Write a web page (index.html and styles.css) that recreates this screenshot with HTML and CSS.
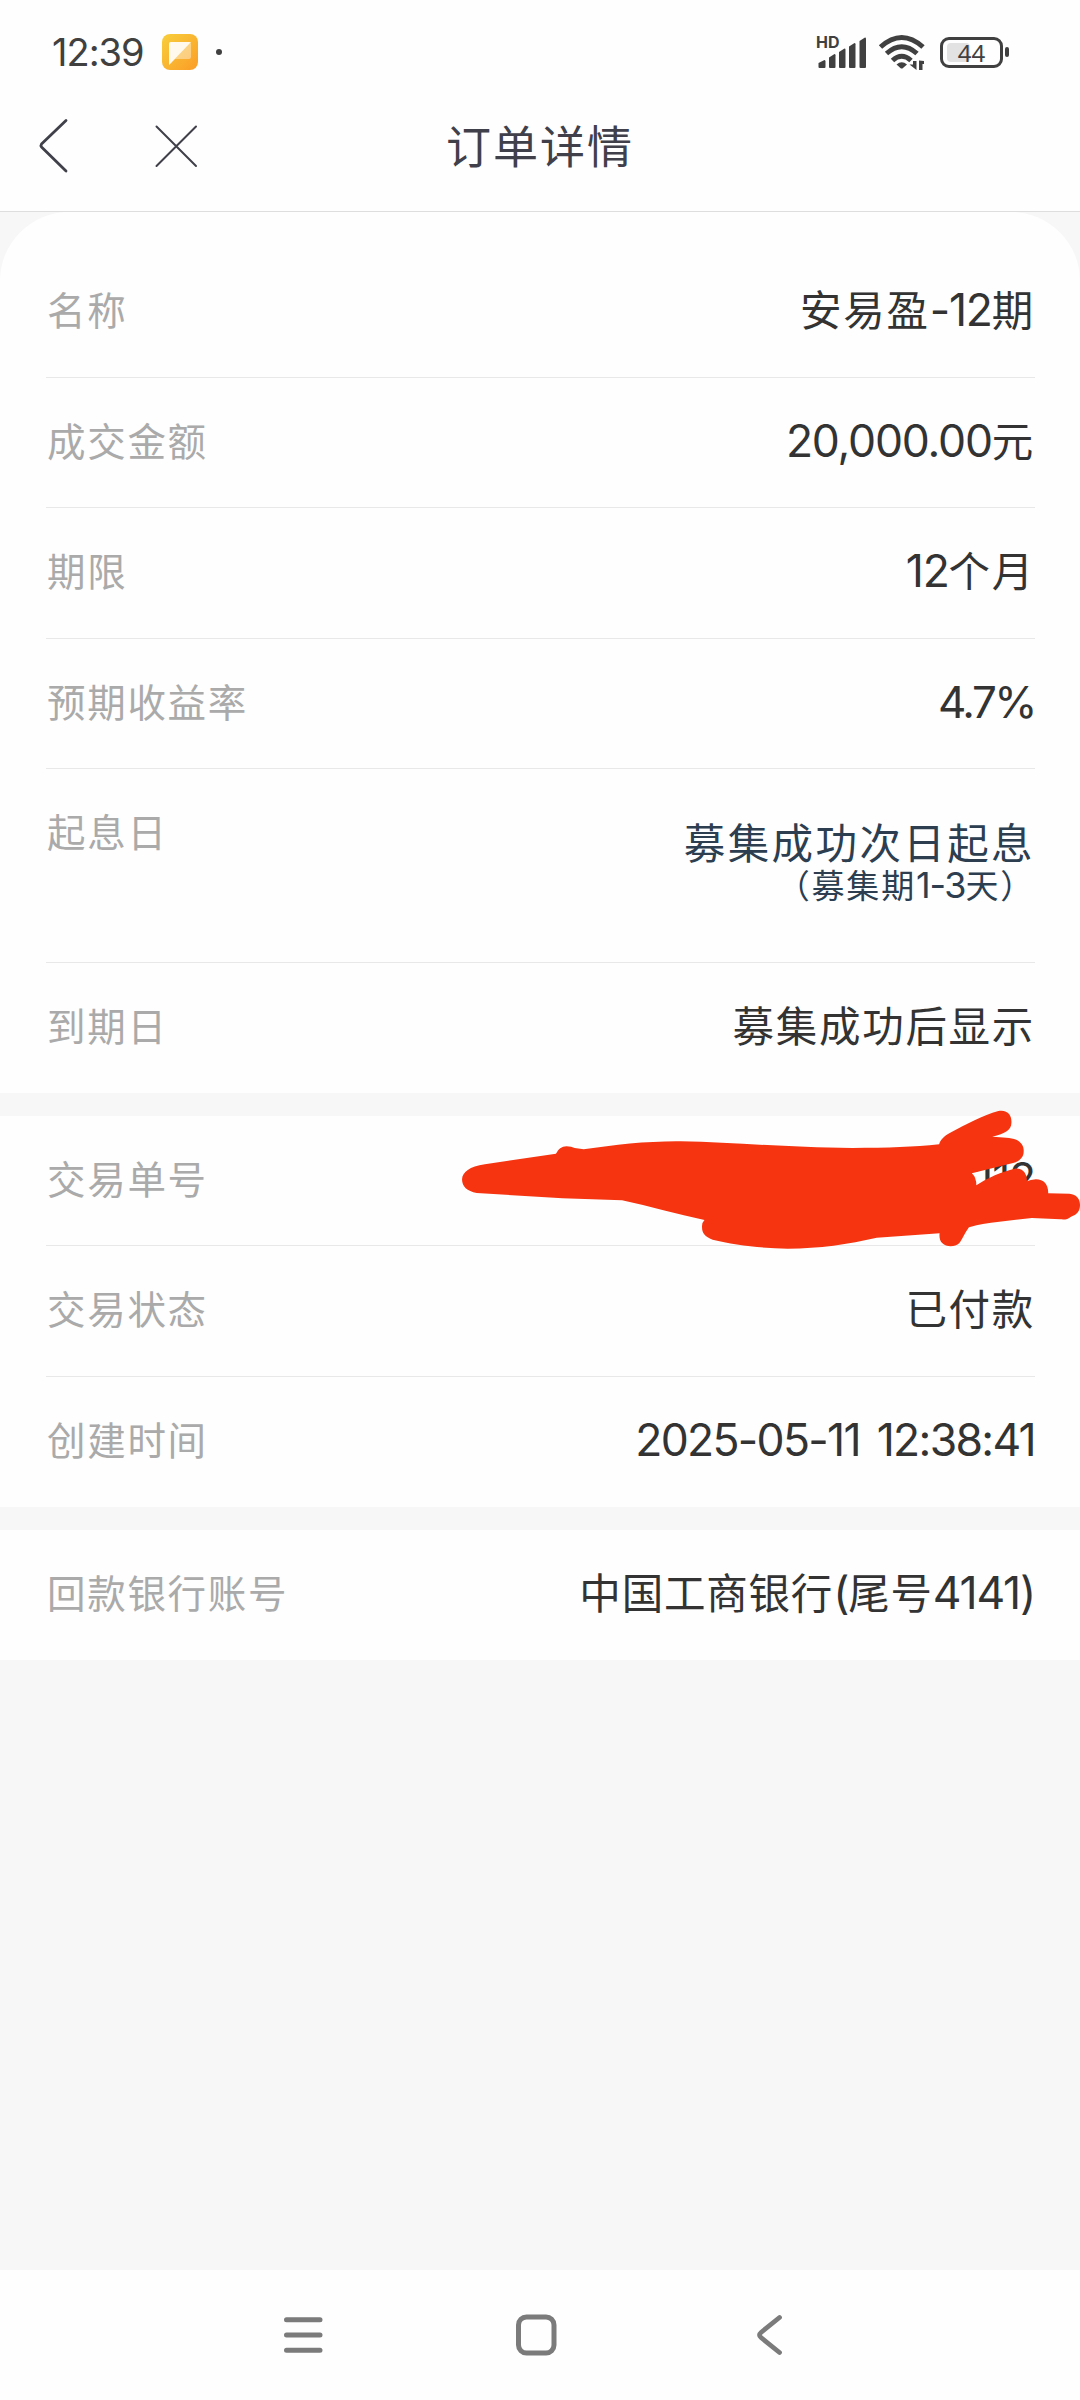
FILE: index.html
```html
<!DOCTYPE html>
<html lang="zh-CN">
<head>
    <meta charset="UTF-8">
    <meta name="viewport" content="width=device-width, initial-scale=1.0">
    <title>订单详情</title>
    <link rel="stylesheet" href="styles.css">
</head>
<body>

    <div class="screen">
        <div class="status-bar">
            <span class="time">12:39</span>
            <svg class="app-icon" width="40" height="40" viewBox="0 0 40 40">
                <defs>
                    <linearGradient id="appBg" x1="0" y1="0" x2="1" y2="1">
                        <stop offset="0" stop-color="#f8cf3c"/>
                        <stop offset="1" stop-color="#fb9c26"/>
                    </linearGradient>
                </defs>
                <rect x="2" y="2" width="36" height="36" rx="8" fill="url(#appBg)"/>
                <path d="M11 10h18q2 0 2 2v13q0 2-2 2H15l-6 6V12q0-2 2-2z" fill="#fff" opacity=".4"/>
                <path d="M11 10h20L9 33V12q0-2 2-2z" fill="#fff" opacity=".85"/>
            </svg>
            <span class="dot"></span>
            <svg class="status-icons" width="120" height="40" viewBox="0 0 120 40">
                <g fill="#404040">
                    <text class="hd" x="4" y="16" textLength="23.5" lengthAdjust="spacingAndGlyphs">HD</text>
                    <path d="M6.500 31l6-3q1 0 1 1.500V35q0 1-1 1h-5q-1 0-1-1z"/>
                    <path d="M17 25.500l5.500-3.500q1 0 1 1.200V35q0 1-1 1H18q-1 0-1-1z"/>
                    <path d="M27 20l5.500-3.500q1 0 1 1.200V35q0 1-1 1H28q-1 0-1-1z"/>
                    <path d="M37 14.500l5.500-3.500q1 0 1 1.200V35q0 1-1 1H38q-1 0-1-1z"/>
                    <path d="M47.500 9l5.500-3.500q1 0 1 1.200V35q0 1-1 1h-4.500q-1 0-1-1z"/>
                    <path d="M84.500 32.500q5.300-4.500 10.500 0L91 36q-1.300 1-2.600 0z"/>
                    <path d="M104.500 29v9l-7-5.500h3.500V29zM107 38v-9.500l5 .5v3h-1.500v6z"/>
                </g>
                <g fill="none" stroke="#404040" stroke-width="5">
                    <path d="M68.500 15Q89.700-4 111 15"/>
                    <path d="M74.500 21.500Q89.700 8 105 21.500"/>
                    <path d="M80.500 28.500Q89.700 20 99 28.500"/>
                </g>
            </svg>
            <div class="battery">
                <span class="battery-level"></span>
                <span class="battery-text">44</span>
            </div>
            <span class="battery-cap"></span>
        </div>

        <div class="nav-bar">
            <svg width="160" height="60" viewBox="0 0 160 60" fill="none" stroke="#40404a" stroke-linecap="round" stroke-linejoin="round">
                <path d="M30 3.500L5.500 27Q4.500 28.500 5.500 30L30 54" stroke-width="2.800"/>
                <path d="M120.500 9.500L160 49M160 9.500L120.500 49" stroke-width="2"/>
            </svg>
            <h1>订单详情</h1>
        </div>

        <div class="content">
            <div class="card first">
                <div class="row">
                    <span class="label">名称</span>
                    <span class="value">安易盈<span class="num">-12</span>期</span>
                </div>
                <div class="row">
                    <span class="label">成交金额</span>
                    <span class="value"><span class="num">20,000.00</span>元</span>
                </div>
                <div class="row">
                    <span class="label">期限</span>
                    <span class="value"><span class="num">12</span>个月</span>
                </div>
                <div class="row">
                    <span class="label">预期收益率</span>
                    <span class="value"><span class="num rate">4.7%</span></span>
                </div>
                <div class="row tall">
                    <span class="label">起息日</span>
                    <div class="value blue">
                        <div>募集成功次日起息</div>
                        <div class="note">（募集期<span class="num">1-3</span>天）</div>
                    </div>
                </div>
                <div class="row">
                    <span class="label">到期日</span>
                    <span class="value">募集成功后显示</span>
                </div>
            </div>

            <div class="card">
                <div class="row">
                    <span class="label">交易单号</span>
                    <span class="value"><span class="num">112</span></span>
                </div>
                <div class="row">
                    <span class="label">交易状态</span>
                    <span class="value">已付款</span>
                </div>
                <div class="row">
                    <span class="label">创建时间</span>
                    <span class="value"><span class="num date">2025-05-11 12:38:41</span></span>
                </div>
                <!-- red marker over the order number -->
                <svg class="scribble" width="640" height="180" viewBox="0 0 1568 540" preserveAspectRatio="none">
                    <path fill="#f63410" d="M54 268C55 246 72 230 110 223L284 191Q292 170 310 169Q322 170 330 174L352 178C430 164 510 153 590 154C720 157 850 172 1010 174C1100 174 1160 171 1223 163C1225 150 1235 138 1250 128C1290 102 1330 76 1368 63C1392 58 1401 78 1400 98C1400 120 1385 130 1353 140C1380 142 1398 142 1412 149C1426 158 1431 170 1430 185C1430 202 1420 213 1404 219L1303 250Q1314 262 1314 286C1340 264 1378 244 1408 236C1430 234 1438 252 1438 274Q1446 270 1460 268C1480 268 1491 285 1490 310L1542 311C1560 314 1568 326 1568 345C1568 364 1560 374 1546 380C1538 388 1532 389 1520 388L1450 384L1350 398Q1306 406 1296 412C1284 432 1280 448 1272 460C1262 472 1240 472 1231 460C1224 452 1223 440 1224 430L1070 443C1000 463 930 475 852 476C790 475 720 465 668 449C649 440 642 430 642 412Q641 398 648 390C580 373 515 349 446 331L300 325L90 309C66 304 54 290 54 268Z"/>
                </svg>
            </div>

            <div class="card">
                <div class="row">
                    <span class="label">回款银行账号</span>
                    <span class="value bank">中国工商银行<span class="num">(</span>尾号<span class="num">4141)</span></span>
                </div>
            </div>
        </div>

        <div class="system-nav">
            <svg width="600" height="130" viewBox="0 0 600 130" fill="none" stroke="#7b7b7b" stroke-linecap="round" stroke-linejoin="round">
                <path d="M46.500 49.700H80M46.500 65H80M46.500 80.300H80" stroke-width="5"/>
                <rect x="278.500" y="47" width="35.500" height="36" rx="8" stroke-width="5"/>
                <path d="M539.500 47.500L521 62.500Q518 65 521 67.500L539.500 82.500" stroke-width="4.800"/>
            </svg>
        </div>
    </div>

</body>
</html>
```

FILE: styles.css
```css
/* General Styles */
body {
    font-family: "Noto Sans CJK SC", sans-serif;
    margin: 0;
    padding: 0;
    background-color: #f7f7f7;
    color: #333;
}

.screen {
    width: 1080px;
    height: 2400px;
    display: flex;
    flex-direction: column;
    overflow: hidden;
}

/* Phone status bar */
.status-bar {
    height: 104px;
    display: flex;
    align-items: center;
    background-color: #fefefe;
    padding-left: 52px;
    box-sizing: border-box;
}

.time {
    font-family: Inter, sans-serif;
    font-size: 38px;
    letter-spacing: -1px;
    color: #404040;
    width: 108px;
    white-space: nowrap;
}

.dot {
    width: 6px;
    height: 6px;
    border-radius: 50%;
    background-color: #404040;
    margin-left: 16px;
}

.status-icons {
    margin-left: 590px;
    margin-right: 8px;
    flex-shrink: 0;
}

.hd {
    font-family: Inter, sans-serif;
    font-size: 16px;
    font-weight: 700;
}

.battery {
    width: 63px;
    height: 31px;
    box-sizing: border-box;
    border: 3px solid #404040;
    border-radius: 9px;
    padding: 3px 4px;
    display: grid;
    flex-shrink: 0;
}

.battery-level {
    grid-area: 1 / 1;
    width: 23px;
    height: 19px;
    border-radius: 4px;
    background-color: #e2e2e2;
}

.battery-text {
    grid-area: 1 / 1;
    font-family: "Noto Sans", sans-serif;
    font-size: 24px;
    line-height: 20px;
    text-align: center;
    color: #404040;
}

.battery-cap {
    width: 4px;
    height: 10px;
    border-radius: 2px;
    background-color: #404040;
    margin-left: 2px;
}

/* Page header */
.nav-bar {
    height: 108px;
    display: grid;
    align-items: center;
    background-color: #fefefe;
    border-bottom: 1px solid #dedede;
    box-sizing: border-box;
}

.nav-bar svg {
    grid-area: 1 / 1;
    margin-left: 36px;
    margin-bottom: 22px;
    overflow: visible;
}

.nav-bar h1 {
    grid-area: 1 / 1;
    margin: 0 0 26px;
    font-size: 45px;
    font-weight: 400;
    line-height: 60px;
    letter-spacing: 2px;
    text-align: center;
    color: #40404a;
}

/* Order details */
.content {
    flex: 1;
    display: flex;
    flex-direction: column;
    gap: 22.7px;
}

.card {
    position: relative;
    background-color: #fefefe;
    padding: 0 45px 0 46px;
}

.card.first {
    padding-top: 35px;
    border-radius: 69px 69px 0 0;
}

.row {
    height: 130.5px;
    display: flex;
    justify-content: space-between;
    box-sizing: border-box;
    padding: 32px 2px 0 1px;
    border-bottom: 1px solid #e8e8e8;
    line-height: 58px;
    white-space: nowrap;
}

.row:last-child,
.row:has(+ .scribble) {
    border-bottom: none;
}

.row.tall {
    height: 193.5px;
}

.label {
    font-size: 38.5px;
    letter-spacing: 1.7px;
    color: #aaa;
}

.value {
    font-size: 41.5px;
    letter-spacing: 1.7px;
    margin-right: -2px;
    text-align: right;
}

.num {
    font-family: Inter, sans-serif;
    font-size: 44.5px;
    letter-spacing: -1.2px;
    line-height: 1;
}

.date {
    letter-spacing: -1.7px;
    word-spacing: 6px;
}

.rate {
    font-size: 44px;
    letter-spacing: -2.5px;
}

.bank {
    letter-spacing: 0.8px;
}

.blue {
    color: #2c3e50;
    line-height: 43px;
    letter-spacing: 2.4px;
    padding-top: 19px;
}

.note {
    font-size: 33px;
    letter-spacing: 1.8px;
    line-height: 43px;
}

.note .num {
    font-size: 36px;
}

.scribble {
    position: absolute;
    left: 440px;
    top: -26px;
}

/* Android navigation */
.system-nav {
    height: 130px;
    padding-left: 240px;
    background-color: #fefefe;
}
```
